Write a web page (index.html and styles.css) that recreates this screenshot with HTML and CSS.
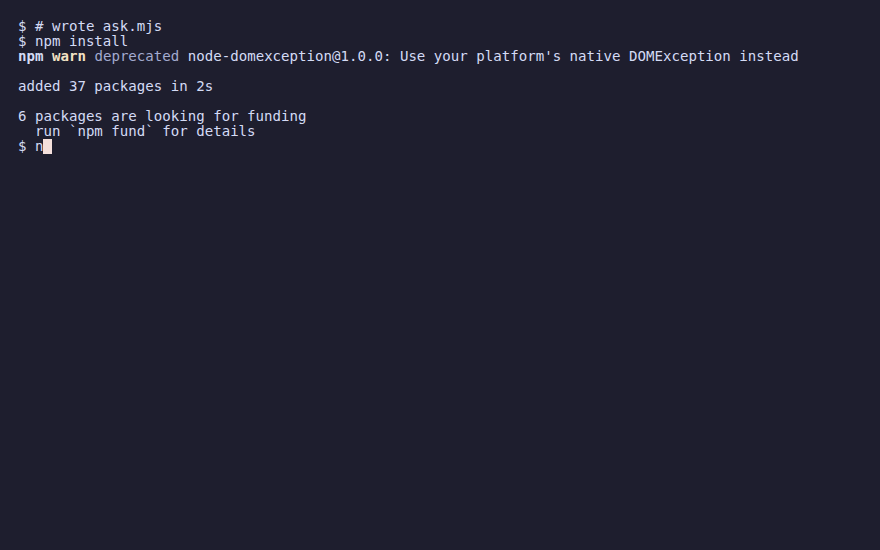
FILE: index.html
```html
<!DOCTYPE html>
<html>
<head>
<meta charset="utf-8">
<link rel="stylesheet" href="styles.css">
</head>
<body>
<pre class="term"><span class="line">$ # wrote ask.mjs</span>
<span class="line">$ npm install</span>
<span class="line"><b class="npm">npm</b> <b class="warn">warn</b> <span class="dep">deprecated</span> node-domexception@1.0.0: Use your platform's native DOMException instead</span>
<span class="line"></span>
<span class="line">added 37 packages in 2s</span>
<span class="line"></span>
<span class="line">6 packages are looking for funding</span>
<span class="line">  run `npm fund` for details</span>
<span class="line">$ n<span class="cursor"> </span></span></pre>
</body>
</html>
```

FILE: styles.css
```css
html, body {
  margin: 0;
  padding: 0;
  background: #1e1e2e;
  width: 880px;
  height: 550px;
  overflow: hidden;
}
.term {
  margin: 0;
  padding: 19px 18px 0 18px;
  font-family: "DejaVu Sans Mono", "Liberation Mono", monospace;
  font-size: 14.1px;
  line-height: 15px;
  color: #d4dbf5;
  white-space: pre;
}
.npm {
  font-weight: bold;
  color: #d4dbf5;
}
.warn {
  font-weight: bold;
  color: #f3e2c4;
}
.dep {
  color: #a3abd0;
}
.cursor {
  display: inline-block;
  width: 8.5px;
  height: 15px;
  vertical-align: top;
  background: #f5e0dc;
}
```
